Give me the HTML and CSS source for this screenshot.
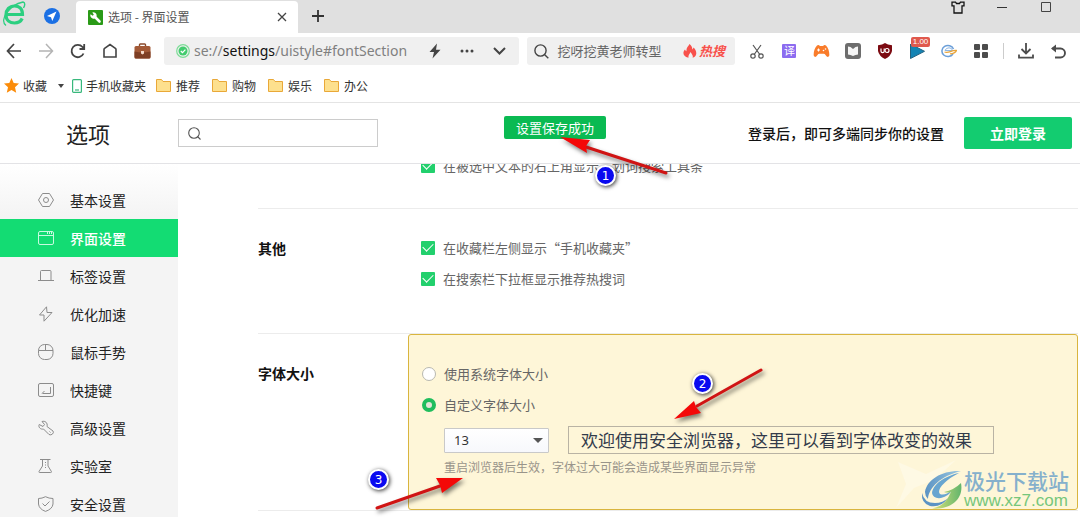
FILE: index.html
```html
<!DOCTYPE html>
<html lang="zh-CN">
<head>
<meta charset="utf-8">
<title>选项 - 界面设置</title>
<link rel="stylesheet" href="styles.css">
</head>
<body>
<div class="tabbar">
  <svg class="brand" width="24" height="27" viewBox="0 0 24 27" fill="none" stroke="#2ccf80"><path d="M4 14.500H20.500C20.500 8.500 17 6 12.500 6C7.500 6 4 9.500 4 15C4 20.500 8 23 12.500 23C16 23 18.800 21.500 20.200 18.500" stroke-width="3.200"/><path d="M4 25.500C-3 20 7 5 21 2C23.500 2.500 23 5.500 21.500 8" stroke-width="1.400"/></svg>
  <svg class="compass" width="16" height="16" viewBox="0 0 16 16"><circle cx="8" cy="8" r="8" fill="#1b70e4"/><path d="M12.500 3.500L3 8l4 1.200L8.300 13z" fill="#fff"/></svg>
  <div class="tab">
    <svg width="15" height="15" viewBox="0 0 15 15"><rect width="15" height="15" rx="1" fill="#2a9a17"/><path d="M6.500 6.500L11.500 11.500" stroke="#fff" stroke-width="2.600" stroke-linecap="round"/><path d="M2.500 4.300L4.800 5.800L5.800 4.800L4.300 2.500A3.200 3.200 0 1 1 2.500 4.300z" fill="#fff"/></svg>
    <span class="tab-title">选项 - 界面设置</span>
    <button class="icon-btn tab-close" aria-label="关闭标签"><svg width="10" height="10" viewBox="0 0 10 10" stroke="#444" stroke-width="1.300"><path d="M1 1l8 8M9 1L1 9"/></svg></button>
  </div>
  <button class="icon-btn new-tab" aria-label="新标签"><svg width="12" height="12" viewBox="0 0 12 12" stroke="#333" stroke-width="1.800"><path d="M6 0v12M0 6h12"/></svg></button>
  <div class="window-controls">
    <button class="icon-btn" aria-label="皮肤"><svg width="14" height="13" viewBox="0 0 14 13" fill="none" stroke="#111" stroke-width="1.300"><path d="M1 1.200h3.500l1 1.300h3l1-1.300H13v3.600h-2V12H3V4.800H1z"/></svg></button>
    <button class="icon-btn" aria-label="最小化"><svg width="10" height="13" viewBox="0 0 10 13" stroke="#333"><path d="M0 6.500h10"/></svg></button>
    <button class="icon-btn" aria-label="最大化"><svg width="11" height="13" viewBox="0 0 11 13" fill="none" stroke="#444"><path d="M.5 1.500h9v9H.5z"/></svg></button>
  </div>
</div>

<div class="toolbar">
  <div class="tools">
    <button class="icon-btn" aria-label="后退"><svg width="16" height="16" viewBox="0 0 16 16" fill="none" stroke="#444" stroke-width="1.700"><path d="M8 1L1.500 8L8 15M1.500 8H15"/></svg></button>
    <button class="icon-btn" aria-label="前进"><svg width="16" height="16" viewBox="0 0 16 16" fill="none" stroke="#b4b4b4" stroke-width="1.500"><path d="M8 1L14.500 8L8 15M14.500 8H1"/></svg></button>
    <button class="icon-btn" aria-label="刷新"><svg width="16" height="16" viewBox="0 0 16 16" fill="none" stroke="#444" stroke-width="1.800"><path d="M13.500 10.500A6.200 6.200 0 1 1 12.500 4L14 5.500M14.200 1v5H9.500"/></svg></button>
    <button class="icon-btn" aria-label="主页"><svg width="16" height="16" viewBox="0 0 16 16" fill="none" stroke="#444" stroke-width="1.600"><path d="M2 14V6.500Q2 5.800 2.600 5.300L8 1.500l5.400 3.800Q14 5.800 14 6.500V14z"/></svg></button>
    <button class="icon-btn" aria-label="工具箱"><svg width="17" height="16" viewBox="0 0 17 16"><path d="M5.500 3.500V1.800q0-.8.800-.8h4.400q.8 0 .8.800v1.700" fill="none" stroke="#8a4a2c" stroke-width="1.400"/><rect x=".5" y="3" width="16" height="12.500" rx="1.500" fill="#a35a37"/><path d="M.5 8.500q8 2 16 0V14q0 1.500-1.500 1.500H2Q.5 15.500.5 14z" fill="#7e3f24"/><path d="M7 8h3v2.500L8.500 11.500L7 10.500z" fill="#f3d9c8"/></svg></button>
  </div>
  <div class="address">
    <svg width="14" height="14" viewBox="0 0 14 14"><circle cx="7" cy="7" r="6.300" fill="none" stroke="#7ddc97" stroke-width="1.200"/><circle cx="7" cy="7" r="4.500" fill="#42cc6e"/><path d="M4.800 7l1.700 1.700L9.400 5.600" fill="none" stroke="#fff" stroke-width="1.200"/></svg>
    <span class="url">se://<b>settings</b>/uistyle#fontSection</span>
    <button class="icon-btn" aria-label="极速模式"><svg width="14" height="16" viewBox="0 0 14 16" fill="#444"><path d="M9 .5L1.500 9H6L4.500 15.500L12.500 6.800H8z"/></svg></button>
    <button class="icon-btn" aria-label="更多"><svg width="14" height="4" viewBox="0 0 14 4" fill="#444"><circle cx="2" cy="2" r="1.500"/><circle cx="7" cy="2" r="1.500"/><circle cx="12" cy="2" r="1.500"/></svg></button>
    <button class="icon-btn" aria-label="展开"><svg width="13" height="8" viewBox="0 0 13 8" fill="none" stroke="#444" stroke-width="2"><path d="M1 1l5.500 5.500L12 1"/></svg></button>
  </div>
  <div class="quick-search">
    <svg width="15" height="15" viewBox="0 0 15 15" fill="none" stroke="#444" stroke-width="1.400"><circle cx="6.500" cy="6.500" r="5.600"/><path d="M10.500 10.500l3.800 3.800"/></svg>
    <span class="query">挖呀挖黄老师转型</span>
    <a class="hot" href="#hot"><svg width="14" height="14" viewBox="0 0 14 14" fill="#f8514b"><path d="M6.500 0C9 2 9.500 4 9.200 5.500Q10.300 5 10.400 3.500C13 5.500 14.500 9.500 12 12.500Q11 13.600 9.500 13.800C10.500 11.500 9 10.500 7.500 8C6.800 10 5 11 5.500 13.800C-.5 12.500-.5 8 2 5.500Q2.600 7 3.500 7.200C3 4 5 2.800 6.500 0z"/></svg>热搜</a>
  </div>
  <div class="tools">
    <button class="icon-btn" aria-label="截图"><svg width="14" height="15" viewBox="0 0 14 15" fill="none" stroke="#555" stroke-width="1.200"><path d="M3 1l6.800 9.500M11 1L4.200 10.500"/><circle cx="3" cy="12" r="2.200"/><circle cx="11" cy="12" r="2.200"/></svg></button>
    <button class="icon-btn" aria-label="翻译"><span class="translate">译</span></button>
    <button class="icon-btn" aria-label="游戏"><svg width="17" height="14" viewBox="0 0 17 14"><path d="M4 1.500Q5.500.500 7 2H10Q11.500.500 13 1.500C15.500 4 16.500 8 16.300 11.500Q15 14.500 12.500 11Q11.800 9.800 10.800 9.800H6.200Q5.200 9.800 4.500 11Q2 14.500.7 11.500C.5 8 1.500 4 4 1.500z" fill="#f97c2b"/><path d="M5.500 4.500v3M4 6h3" stroke="#fff"/><circle cx="10.500" cy="6.500" r=".8" fill="#fff"/><circle cx="12.500" cy="5" r=".8" fill="#fff"/></svg></button>
    <button class="icon-btn" aria-label="阅读"><svg width="16" height="16" viewBox="0 0 16 16"><rect width="16" height="16" rx="3" fill="#6d6d6d"/><path d="M3 3.500L5.500 4L8 6L10.500 4L13 3.500V11.500L10.500 12L8 13L5.500 12L3 11.500z" fill="#f5f5f5"/></svg></button>
    <button class="icon-btn" aria-label="uBlock"><svg width="14" height="16" viewBox="0 0 14 16"><path d="M7 0Q9.500 2 14 2.200V8Q13 13 7 16Q1 13 0 8V2.200Q4.500 2 7 0z" fill="#7c0b12"/><path d="M3 5.500v2.800q0 1.300 1.600 1.300t1.600-1.300V5.500" fill="none" stroke="#fff" stroke-width="1.200"/><circle cx="9" cy="7.500" r="2" fill="none" stroke="#fff" stroke-width="1.200"/></svg></button>
    <button class="icon-btn speed" aria-label="播放速度"><svg width="15" height="15" viewBox="0 0 15 15"><path d="M.5 0L14.500 7.300L.5 14.500z" fill="#1484b4" stroke="#24617f"/></svg><span class="speed-badge">1.00</span></button>
    <button class="icon-btn" aria-label="兼容模式"><svg width="16" height="14" viewBox="0 0 16 14" fill="none"><path d="M12 10A6 5.500 0 1 1 12.500 5" stroke="#6c9fd8" stroke-width="1.500"/><path d="M4 6.500H11.500Q11 3.800 8 3.800T4 6.500" stroke="#8fb6e2"/><path d="M3.500 8C8 9.500 10 6 15.500 6.500Q14 9.500 9 9.800" stroke="#e8a53b" stroke-width="1.300"/></svg></button>
    <button class="icon-btn" aria-label="扩展"><svg width="14" height="14" viewBox="0 0 14 14" fill="#4c4c4c"><rect width="6" height="6" rx="1"/><rect x="8" width="6" height="6" rx="1"/><rect y="8" width="6" height="6" rx="1"/><rect x="8" y="8" width="6" height="6" rx="1"/></svg></button>
  </div>
  <i class="divider"></i>
  <div class="tools">
    <button class="icon-btn" aria-label="下载"><svg width="16" height="16" viewBox="0 0 16 16" fill="none" stroke="#4c4c4c" stroke-width="1.800"><path d="M8 0v10.500M3.500 6L8 10.500L12.500 6M1 11.500v3.200h14v-3.200"/></svg></button>
    <button class="icon-btn" aria-label="恢复"><svg width="15" height="15" viewBox="0 0 15 15" fill="none" stroke="#4c4c4c" stroke-width="1.900"><path d="M1.500 4.500H9.500a4.500 4.500 0 0 1 0 9H4"/><path d="M5 .500v8L0 4.500z" fill="#4c4c4c" stroke="none"/></svg></button>
  </div>
</div>

<nav class="bookmarks">
  <a class="favorites" href="#fav"><svg width="15" height="15" viewBox="0 0 15 15" fill="#fb8c0a"><path d="M7.500 0l2.200 5.100 5.300.5-4 3.700 1.200 5.400-4.700-2.800-4.700 2.800L4 9.300 0 5.600l5.300-.5z"/></svg>收藏<i class="caret"></i></a>
  <a class="phone" href="#phone"><svg width="10" height="14" viewBox="0 0 10 14" fill="none" stroke="#38b87c" stroke-width="1.200"><rect x=".6" y=".6" width="8.800" height="12.800" rx="1"/><path d="M3 11h4"/></svg>手机收藏夹</a>
  <a href="#a"><svg width="15" height="13" viewBox="0 0 15 13"><path d="M.5 12.500V.5h5l1.500 2h7.500v10z" fill="#fde08e" stroke="#e9a838"/></svg>推荐</a>
  <a href="#b"><svg width="15" height="13" viewBox="0 0 15 13"><path d="M.5 12.500V.5h5l1.500 2h7.500v10z" fill="#fde08e" stroke="#e9a838"/></svg>购物</a>
  <a href="#c"><svg width="15" height="13" viewBox="0 0 15 13"><path d="M.5 12.500V.5h5l1.500 2h7.500v10z" fill="#fde08e" stroke="#e9a838"/></svg>娱乐</a>
  <a href="#d"><svg width="15" height="13" viewBox="0 0 15 13"><path d="M.5 12.500V.5h5l1.500 2h7.500v10z" fill="#fde08e" stroke="#e9a838"/></svg>办公</a>
</nav>

<header class="header">
  <h1>选项</h1>
  <label class="search"><svg width="13" height="13" viewBox="0 0 13 13" fill="none" stroke="#555" stroke-width="1.100"><circle cx="6" cy="6" r="5.300"/><path d="M9.500 9.500l3 3"/></svg><input type="text" aria-label="搜索设置"></label>
  <span class="login-tip">登录后，即可多端同步你的设置</span>
  <button class="login">立即登录</button>
  <div class="toast" role="status">设置保存成功</div>
</header>

<div class="page">
  <nav class="sidebar">
    <a href="#basic"><svg viewBox="0 0 16 16"><path d="M4.500 1.500h7L15.500 8l-4 6.500h-7L.5 8z"/><circle cx="8" cy="8" r="2.500"/></svg>基本设置</a>
    <a class="active" href="#ui"><svg viewBox="0 0 16 16"><rect x=".5" y="1.500" width="15" height="13" rx="1.500"/><path d="M.5 5.500h15M9.500 2v2M11.500 2v2M13.500 2v2"/></svg>界面设置</a>
    <a href="#tab"><svg viewBox="0 0 16 16"><path d="M2.500 12V3.500q0-1 1-1h8.500q1 0 1 1V12M0 12.500h16"/></svg>标签设置</a>
    <a href="#speed"><svg viewBox="0 0 16 16"><path d="M8.500.8L1.500 9H6v6.200L14 6.500H9z"/></svg>优化加速</a>
    <a href="#mouse"><svg viewBox="0 0 16 16"><rect x=".5" y=".5" width="14.500" height="15" rx="6"/><path d="M.5 6.500H15M7.500.5v6"/></svg>鼠标手势</a>
    <a href="#keys"><svg viewBox="0 0 16 16"><rect x=".5" y="1.500" width="15" height="13" rx="1.500"/><path d="M12.500 5v6.500h-8M6.500 9l-2.500 2.500"/></svg>快捷键</a>
    <a href="#adv"><svg viewBox="0 0 16 16"><path d="M4 1.500L6.500 4.500L5 6.500L1.200 4.500C0 7 2.500 9.800 5.500 9l5.500 5.500q2 1 3.500-.5t.5-3L9 6.500C10 2.800 7 .5 4 1.500z"/><path d="M11.500 11.500l1 1"/></svg>高级设置</a>
    <a href="#lab"><svg viewBox="0 0 16 16"><path d="M2 1.500h10.500M4.500 1.500V8L1 13.500q-.3 1 .7 1h11q1 0 .7-1L10 8V1.500"/><path d="M7.500 4v6" stroke-dasharray="1 1.500"/></svg>实验室</a>
    <a href="#safe"><svg viewBox="0 0 16 16"><path d="M7.500.7Q11 2.500 15 2.500V8Q14.500 13 7.500 15.400Q1 13 .5 8V2.500Q4 2.500 7.500.7z"/><path d="M4.500 7.500l2.500 2.500L11.500 5.500"/></svg>安全设置</a>
  </nav>
  <main class="content">
    <section class="group clipped">
      <h2></h2>
      <div class="options">
        <label><input type="checkbox" checked>在被选中文本的右上角显示“划词搜索工具条”</label>
      </div>
    </section>
    <section class="group">
      <h2>其他</h2>
      <div class="options">
        <label><input type="checkbox" checked>在收藏栏左侧显示“手机收藏夹”</label>
        <label><input type="checkbox" checked>在搜索栏下拉框显示推荐热搜词</label>
      </div>
    </section>
    <section class="group">
      <h2>字体大小</h2>
      <div class="options highlight">
        <label><input type="radio" name="font">使用系统字体大小</label>
        <label><input type="radio" name="font" checked>自定义字体大小</label>
        <div class="font-row">
          <div class="select-wrap"><select aria-label="字体大小"><option>13</option></select></div>
          <div class="sample">欢迎使用安全浏览器，这里可以看到字体改变的效果</div>
        </div>
        <p class="hint">重启浏览器后生效，字体过大可能会造成某些界面显示异常</p>
      </div>
    </section>
    <section class="group"></section>
  </main>
</div>

<svg class="annotations" width="1080" height="517" viewBox="0 0 1080 517">
  <path class="glint" d="M898 462l28 12 30-14-22 20-20 8-18 20 10-24z"/>
  <g class="arrow">
    <path d="M666 173L586 147" /><path class="tip" d="M560 137l30 3-4 6 1 7z"/>
    <path d="M761 370L697 406"/><path class="tip" d="M674 419l20-18 2 6 5 6z"/>
    <path d="M377 508L440 486"/><path class="tip" d="M463 478l-27 0 4 7 2 8z"/>
  </g>
  <g class="badge">
    <circle cx="605.500" cy="175.500" r="9.500"/><circle cx="702.500" cy="383.500" r="9.500"/><circle cx="378.500" cy="479.500" r="9.500"/>
  </g>
  <g class="badge-text"><text x="605.500" y="180">1</text><text x="702.500" y="388">2</text><text x="378.500" y="484">3</text></g>
</svg>

<div class="watermark">
  <svg width="42" height="40" viewBox="0 0 42 40">
    <defs><linearGradient id="w" x2="1"><stop stop-color="#5b93c4"/><stop offset="1" stop-color="#9cc8e0"/></linearGradient><linearGradient id="g" x2="1"><stop stop-color="#dbe27a"/><stop offset="1" stop-color="#62b56c"/></linearGradient></defs>
    <path d="M40 1C22 0 6 9 4 22Q4 26 7 29C8 17 20 6 40 1z" fill="url(#w)"/>
    <path d="M38 3C24 6 12 14 11 23Q12 29 20 28Q28 26 31 20Q24 26 19 24C15 19 26 9 38 3z" fill="#68a5d0"/>
    <path d="M1 23Q3 33 14 33Q22 33 27 28Q20 38 9 36Q0 33 1 23z" fill="#5b93c4"/>
    <path d="M40 13C43 29 30 40 11 38.500C24 36 27 28 30 22Q26 23 23 22Q33 20 40 13z" fill="url(#g)"/>
  </svg>
  <div class="watermark-text"><span class="wm-name">极光下载站</span><span class="wm-url">www.xz7.com</span></div>
</div>
</body>
</html>
```
FILE: styles.css
```css
* { box-sizing: border-box; }
body {
  margin: 0;
  height: 100vh;
  display: flex;
  flex-direction: column;
  overflow: hidden;
  position: relative;
  background: #fff;
  color: #333;
  font: 13px/18px "Noto Sans CJK SC", sans-serif;
}
a { color: inherit; text-decoration: none; }
h1, h2, p { margin: 0; }
svg { flex: none; display: block; }
.icon-btn {
  display: flex;
  align-items: center;
  justify-content: center;
  flex: none;
  width: 24px;
  height: 24px;
  padding: 0;
  border: 0;
  background: none;
}

/* Tab strip */
.tabbar { display: flex; align-items: flex-start; height: 33px; flex: none; background: #e0e0e0; padding-left: 2px; }
.compass { margin: 8px 0 0 18px; }
.tab {
  display: flex;
  align-items: center;
  gap: 5px;
  width: 222px;
  height: 32px;
  margin: 1px 0 0 16px;
  padding: 0 4px 0 12px;
  border-radius: 4px 4px 0 0;
  background: #fff;
  font-size: 12px;
  color: #555;
}
.tab-close { margin-left: auto; }
.new-tab { margin: 4px 0 0 8px; }
.window-controls { display: flex; gap: 20px; margin: -5px 22px 0 auto; }

/* Toolbar */
.toolbar { display: flex; align-items: center; height: 36px; flex: none; padding: 0 10px 0 2px; }
.tools { display: flex; gap: 8px; flex: none; }
.address, .quick-search { display: flex; align-items: center; height: 28px; min-width: 0; border-radius: 3px; background: #f0f0f0; }
.address { flex: 329 1 0; margin: 0 8px 0 10px; padding: 0 8px 0 12px; gap: 8px; }
.url { flex: 1; margin-left: -4px; font: 14px/20px "Noto Sans", "Noto Sans CJK SC", sans-serif; color: #808080; white-space: nowrap; }
.url b { font-weight: 400; color: #111; }
.quick-search { flex: 187 1 0; margin-right: 10px; padding: 0 10px 0 7px; gap: 8px; color: #666; white-space: nowrap; }
.hot { display: flex; align-items: center; gap: 2px; margin-left: auto; color: #f8514b; font-weight: 700; font-style: italic; }
.translate { width: 14px; height: 14px; border-radius: 1px; background: #8c6cf0; color: #fff; font-size: 11px; line-height: 14px; }
.speed { position: relative; }
.speed-badge {
  position: absolute;
  top: -2px;
  left: 6px;
  width: 19px;
  border-radius: 2px;
  background: #e0594d;
  color: #fff;
  font: 8px/10px "Liberation Sans", sans-serif;
}
.divider { width: 1px; height: 16px; margin: 0 10px; background: #ccc; }

/* Bookmarks */
.bookmarks { display: flex; align-items: center; gap: 12px; height: 34px; flex: none; padding-left: 4px; border-bottom: 1px solid #e4e4e4; font-size: 12px; }
.bookmarks a { display: flex; align-items: center; gap: 5px; }
.bookmarks .favorites { gap: 4px; margin-right: -4px; }
.bookmarks .phone { gap: 4px; margin-right: -2px; }
.caret { margin-left: 7px; border: 3px solid transparent; border-top: 4px solid #444; border-bottom: 0; }

/* Settings header */
.header { position: relative; display: flex; align-items: center; height: 61px; flex: none; padding-right: 8px; border-bottom: 1px solid #e3e3e6; }
h1 { width: 178px; padding-left: 66px; font-size: 22px; line-height: 32px; font-weight: 400; color: #222; }
.search { display: flex; align-items: center; width: 200px; height: 28px; padding: 0 9px; gap: 6px; border: 1px solid #ccc; }
.search input { flex: 1; min-width: 0; border: 0; outline: 0; background: none; font: inherit; }
.login-tip { margin: 0 20px 0 auto; font-size: 14px; font-weight: 500; color: #111; }
.login { width: 108px; height: 32px; padding: 0; border: 0; border-radius: 2px; background: #13cc70; color: #fff; font: 700 14px/20px "Noto Sans CJK SC", sans-serif; }
.toast { position: absolute; top: 13px; left: calc(50% + 15px); transform: translateX(-50%); padding: 0 12px; border-radius: 2px; background: #0aba52; color: #fff; line-height: 23px; }

/* Body */
.page { display: flex; flex: 1; min-height: 0; overflow: hidden; }
.sidebar { width: 178px; flex: none; padding-top: 17px; background: linear-gradient(#fff, #f4f4f4 52px); }
.sidebar a { display: flex; align-items: center; gap: 16px; height: 38px; padding: 0 0 1px 38px; font-size: 14px; color: #222; }
.sidebar svg { width: 16px; height: 16px; fill: none; stroke: #8c8c8c; }
.sidebar .active { background: #13dc73; color: #fff; font-weight: 500; }
.sidebar .active svg { stroke: #c8fadf; }

.content { flex: 1; min-width: 0; padding: 0 2px 0 80px; }
.group { display: flex; border-top: 1px solid #ececec; }
h2 { width: 150px; flex: none; padding-top: 24px; font-size: 14px; line-height: 31px; font-weight: 700; color: #111; }
.clipped { margin-top: -38px; }
.options { flex: 1; padding: 23px 12px 39px 13px; color: #666; }
.clipped .options { padding-bottom: 27px; }
.options label { display: flex; align-items: center; gap: 8px; height: 31px; }
.options input { appearance: none; flex: none; display: grid; place-items: center; width: 14px; height: 14px; margin: 0; }
.options [type="checkbox"] { border-radius: 1px; background: #22d06d; }
.options [type="checkbox"]::after { content: ""; width: 9px; height: 5px; margin-bottom: 3px; border: solid #fff; border-width: 0 0 1px 1px; transform: rotate(-45deg); }
.options [type="radio"] { border: 1px solid #b8b8b0; border-radius: 50%; background: #fff; }
.options [type="radio"]:checked { border: 4px solid #20bd5d; background: #e5e5d8; }
.options.highlight { padding: 23px 12px 33px 13px; border: 1px solid #d9b53e; border-radius: 3px; background: #fef6d8; }
.font-row { display: flex; align-items: center; gap: 19px; margin: 6px 0 4px 22px; }
.select-wrap { position: relative; width: 105px; height: 25px; }
.select-wrap::after { content: ""; position: absolute; top: 10px; right: 6px; border: 5px solid transparent; border-top-color: #555; border-bottom: 0; pointer-events: none; }
select { appearance: none; width: 100%; height: 100%; padding: 0 9px; border: 1px solid #c9c9c9; border-radius: 1px; background: linear-gradient(#fff, #f7f8fc); color: #333; font: 13px/20px "Noto Sans", sans-serif; }
.sample { width: 426px; height: 28px; padding-left: 12px; border: 1px solid #b9b3a4; color: #333b4b; font-size: 17px; line-height: 26px; white-space: nowrap; }
.hint { margin-left: 22px; font-size: 12px; color: #99948a; }

/* Callouts drawn over the page */
.annotations { position: absolute; top: 0; left: 0; pointer-events: none; }
.glint { fill: #fff; opacity: .3; }
.arrow { fill: none; stroke: #d01414; stroke-width: 3; stroke-linecap: round; filter: drop-shadow(2px 3px 2px rgba(0, 0, 0, .5)); }
.arrow .tip { fill: #f40808; stroke: none; }
.badge { fill: #0a0af0; stroke: #fff; stroke-width: 2; filter: drop-shadow(1px 1px 2px rgba(0, 0, 0, .8)); }
.badge-text { fill: #fff; font: 12px "DejaVu Sans", sans-serif; text-anchor: middle; }
.watermark { position: absolute; right: 11px; bottom: 7px; display: flex; align-items: center; gap: 1px; }
.watermark-text { display: flex; flex-direction: column; gap: 1px; white-space: nowrap; }
.wm-name { font-size: 21px; line-height: 22px; font-weight: 500; color: #85b0cc; }
.wm-url { font: 17px/18px "Liberation Sans", sans-serif; color: #76c67b; }
```
